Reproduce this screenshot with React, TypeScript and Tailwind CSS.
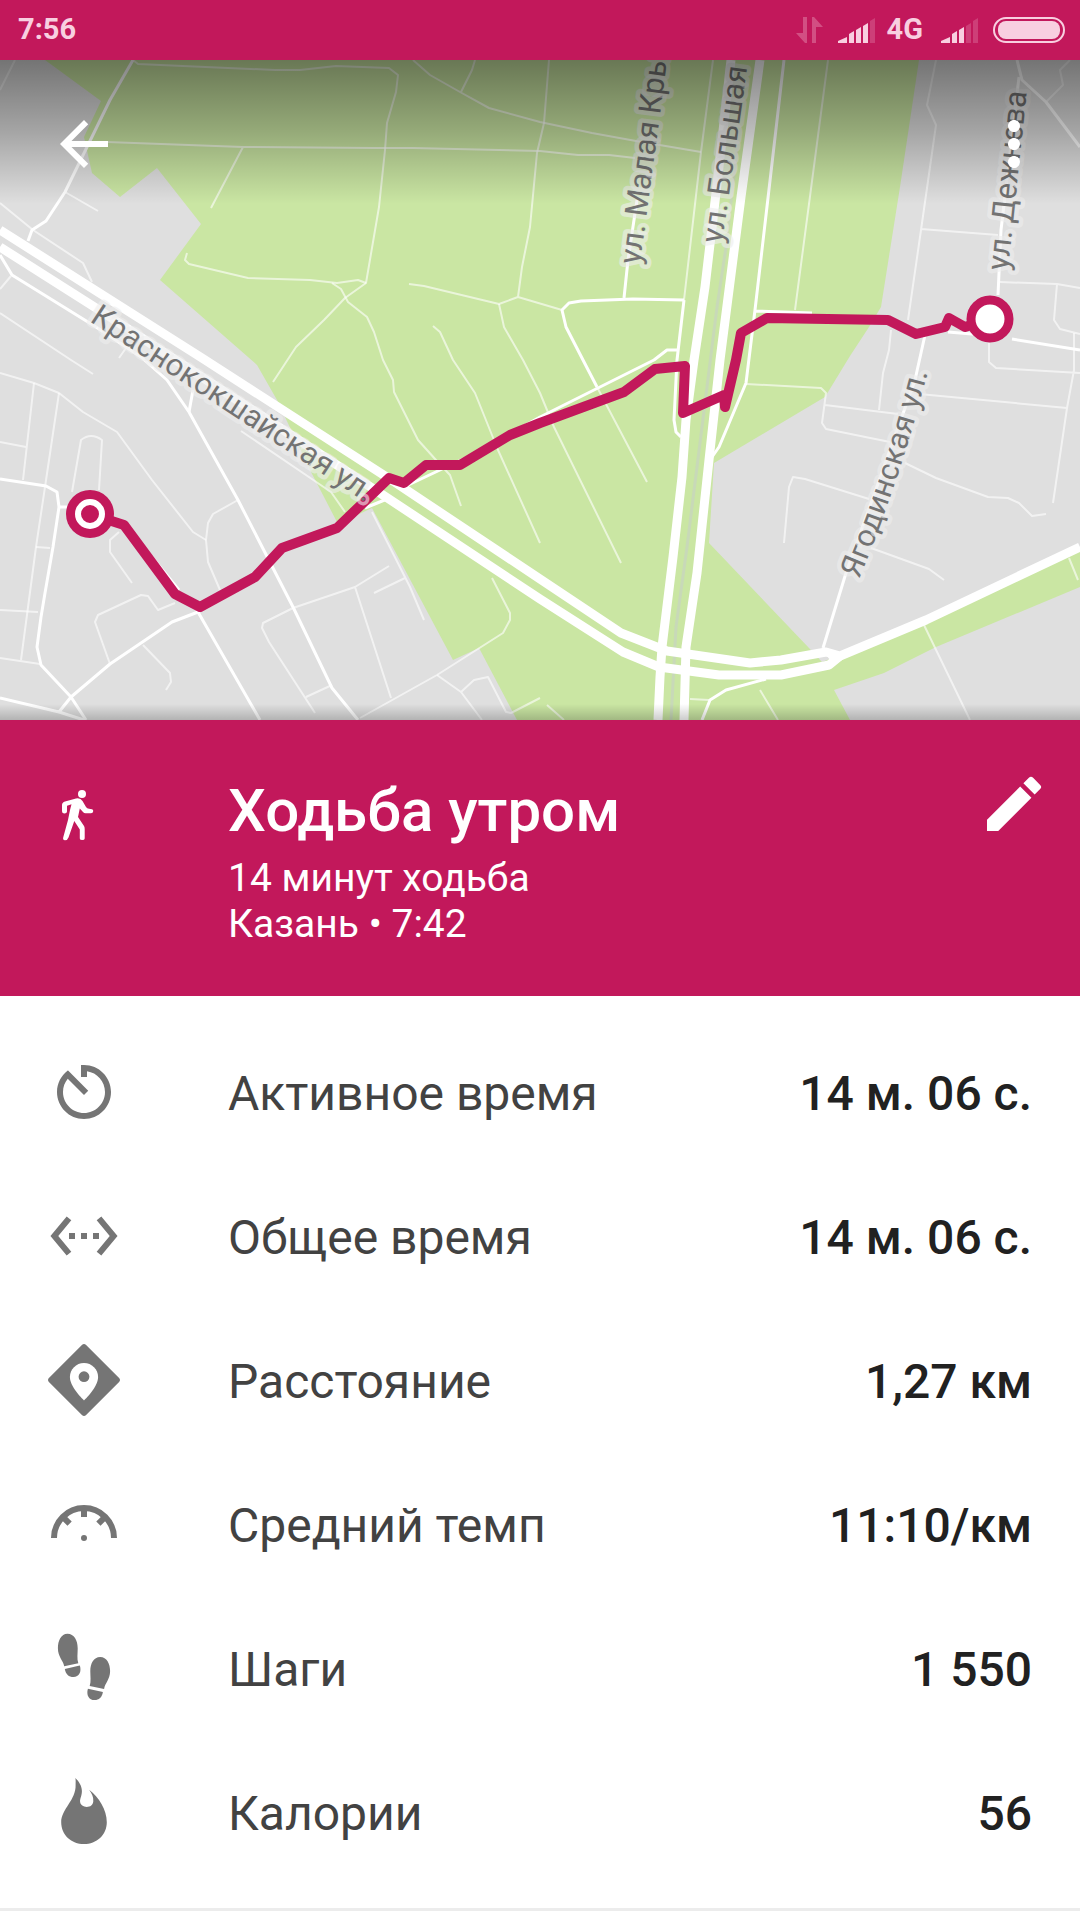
import React from 'react';
import { MdArrowBack, MdEdit, MdMoreVert, MdSettingsEthernet } from 'react-icons/md';

// ----------------------------------------------------
// MAP DATA
// ----------------------------------------------------

const PARKS = [
  'M45 60L101 101L84 137L92 173L120 197L157 168L201 224L160 280L257 365L277 400L310 470L338 524L372 508L453 660L479 648L517 720H850L834 690L884 673L936 647L1080 587V547L926 618L840 655L822 662L809 648L709 543L714 463L825 397L850 356L869 327L881 307L900 187L919 60Z',
];

const HIGHWAYS = [
  'M0 230L202 358L396 483L540 579L621 633L667 651L750 663L781 660L826 652L840 656L926 620L1080 547',
  'M0 247L96 308L386 497L540 599L623 652L659 667L719 675L781 675L829 665L840 656',
  'M731 60L716 193L705 287L694 360L686 420L682 477L673 557L662 647L660 677L658 720',
  'M760 60L741 197L720 360L709 460L697 573L686 647L684 720',
];

const STREETS = [
  'M133 60L110 100L65 192L46 221L32 230L28 241',
  'M0 255L12 275L96 327L141 357L167 380L189 412L238 500L293 607L332 688L358 720',
  'M0 479L46 486L57 492L59 507L53 547L45 593L41 617L37 647L41 665L71 697L86 720',
  'M0 698L59 712L84 720M59 712L71 697L110 664L172 622L198 612L260 720',
  'M59 507H69M193 390L189 412M128 528L179 590',
  'M365 508L387 499M404 487L478 452L540 417L654 360L667 350H678',
  'M624 298L628 260L637 200',
  'M684 300L633 299L581 301L569 303L562 310L566 327L583 360L597 387',
  'M684 300L677 360L674 420L676 432L681 437',
  'M784 60L755 310L746 383L719 447L712 457M755 311L812 313',
  'M1019 77L1001 230L998 295M948 332L984 335M1012 339L1080 350',
  'M925 335L915 380L846 573L823 648',
  'M702 720L710 700L726 690L766 679',
  'M1017 60L1022 80L1046 102L1080 147',
  'M823 648L832 660',
];

const LANES = [
  'M15 60L0 90M65 192L98 211M0 203L33 230L83 263L92 282',
  'M133 60L138 64L275 70H300L336 66L389 68L398 75L396 92L387 123L385 150L379 207L366 283L345 298L324 320L296 347L273 382',
  'M107 142L243 147L375 148H413L540 151L578 155H609L635 158M243 147L211 208',
  'M187 253L185 260L189 264L248 278L310 280L337 283L358 280L366 283',
  'M332 283L341 289L348 302L367 317L374 332L383 360L393 380L394 392L418 440L436 460L450 475L461 506',
  'M413 60L430 75L460 92L489 108L540 122L592 133L636 141L701 152M475 60L472 70L461 92',
  'M549 60L544 123L537 153L530 227L522 267L518 297L499 304L424 286L409 284M518 297L562 310',
  'M499 304L504 327L523 360L540 393L554 427L621 563',
  'M433 326L440 332L453 360L475 393L498 450L540 543',
  'M0 289L11 276M0 313L71 360L93 374M126 348L119 358',
  'M0 373L34 383L59 393L83 412L117 432L152 480L193 532L206 540',
  'M34 383L23 480M59 393L45 487L36 547L21 660M0 442L26 447',
  'M72 492L81 440Q91 432 102 440L99 490',
  'M36 547L50 548M0 610L38 612M0 658L40 664',
  'M119 532L110 540V552L132 583',
  'M175 603L158 610L148 596L141 595L98 615L95 622L110 664',
  'M143 645L170 673L171 682L166 690',
  'M220 590L208 562L206 540L208 523L213 514L238 500',
  'M241 431L331 492L345 512',
  'M389 566L355 587L293 608L263 623L262 628L269 642L315 713M355 587L391 698M306 697L332 685',
  'M405 578L374 593M372 512L410 587L424 620',
  'M360 718L437 675L503 633L510 620V613L492 578',
  'M437 675L461 692L482 720M461 692L474 680L488 677L506 712L511 713L540 698M547 705L564 720',
  'M597 387L647 482M713 60L701 152L684 300M828 60L795 310',
  'M746 384L821 388L826 393L822 423L826 429L890 442M825 405L898 414',
  'M936 60L927 105L936 125L921 230L908 320M921 229L998 235',
  'M1070 60L1060 70L1063 85L1046 102',
  'M1000 282L1057 284L1080 288M1057 284L1054 320L1060 329L1080 334',
  'M989 343V362L996 368L1080 373M1074 333V370L1067 408L1053 503M919 394L1067 408',
  'M891 330L889 350L883 373L879 410',
  'M905 463L936 478L988 497L1008 498L1019 503L1032 516L1046 514',
  'M869 499L805 479L793 477L789 487L784 543M871 548L929 569L944 580',
  'M924 625L970 720M1069 558L1078 580M690 699L709 700M760 690L778 720',
];

const RAILWAY = 'M739 130L726 247L717 307L707 387L687 547L676 627L671 720';

const ROUTE =
  'M90 514L124 525L175 594L200 607L255 577L282 548L337 528L389 478L404 483L426 465H460L510 435L540 423L624 392L655 369L685 366L683 413L724 395L725 407L736 360L741 333L767 318L888 320L916 334L945 327L949 318L965 327L990 319';

const STREET_LABELS = [
  { id: 'krasnokokshayskaya', d: 'M89 321L400 525', text: 'Краснококшайская ул.' },
  { id: 'malaya', d: 'M640 265L661 107L672 20', text: 'ул. Малая Кры' },
  { id: 'bolshaya', d: 'M722 244L754 20', text: 'ул. Большая' },
  { id: 'dezhneva', d: 'M1008 271L1029 70', text: 'ул. Дежнева' },
  { id: 'yagodinskaya', d: 'M859 579Q905 470 937 335', text: 'Ягодинская ул.' },
];

// ----------------------------------------------------
// MAP
// ----------------------------------------------------

const RouteMap = () => (
  <svg viewBox="0 60 1080 660" className="block w-full" role="img" aria-label="Маршрут">
    <defs>
      <linearGradient id="topShade" x1="0" y1="0" x2="0" y2="1">
        <stop offset="0" stopColor="#000" stopOpacity="0.48" />
        <stop offset="0.5" stopColor="#000" stopOpacity="0.26" />
        <stop offset="1" stopColor="#000" stopOpacity="0" />
      </linearGradient>
      <linearGradient id="bottomShade" x1="0" y1="0" x2="0" y2="1">
        <stop offset="0" stopColor="#000" stopOpacity="0" />
        <stop offset="1" stopColor="#000" stopOpacity="0.2" />
      </linearGradient>
      {STREET_LABELS.map((l) => (
        <path key={l.id} id={l.id} d={l.d} />
      ))}
    </defs>

    <rect x="0" y="60" width="1080" height="660" fill="#dfdfdf" />
    {PARKS.map((d) => <path key={d} d={d} fill="#cae6a3" />)}
    <path d={RAILWAY} fill="none" stroke="#c8d9b8" strokeWidth="3" />

    <g fill="none" stroke="#fff" strokeLinejoin="round">
      <g strokeWidth="2" strokeOpacity="0.6">
        {LANES.map((d) => <path key={d} d={d} />)}
      </g>
      <g strokeWidth="3">
        {STREETS.map((d) => <path key={d} d={d} />)}
      </g>
      <g strokeWidth="9">
        {HIGHWAYS.map((d) => <path key={d} d={d} />)}
      </g>
    </g>

    <path d={ROUTE} fill="none" stroke="#c2185b" strokeWidth="10" strokeLinejoin="round" />

    <g
      fill="#737373"
      stroke="#eeeeee"
      strokeOpacity="0.6"
      strokeWidth="9"
      strokeLinejoin="round"
      paintOrder="stroke"
      fontSize="31"
      className="font-[Roboto,sans-serif]"
    >
      {STREET_LABELS.map((l) => (
        <text key={l.id}>
          <textPath href={`#${l.id}`}>{l.text}</textPath>
        </text>
      ))}
    </g>

    <circle cx="90" cy="514" r="24" fill="#c2185b" />
    <circle cx="90" cy="514" r="12" fill="none" stroke="#fff" strokeWidth="6" />
    <circle cx="990" cy="319" r="19" fill="#fff" stroke="#c2185b" strokeWidth="9" />

    <rect x="0" y="60" width="1080" height="144" fill="url(#topShade)" />
    <rect x="0" y="704" width="1080" height="16" fill="url(#bottomShade)" />
  </svg>
);

// ----------------------------------------------------
// ICONS
// ----------------------------------------------------

const SignalIcon = ({ level }: { level: number }) => (
  <svg viewBox="0 0 37 26" className="h-[26px] w-[37px]" fill="currentColor">
    {['M0 26V24L9 20V26Z', 'M11 26V17L16 14V26Z', 'M18 26V13L23 10V26Z', 'M25 26V9L30 6V26Z', 'M32 26V4L37 1V26Z'].map((d, i) => (
      <path key={d} d={d} opacity={i < level ? 1 : 0.22} />
    ))}
  </svg>
);

const DataIcon = () => (
  <svg viewBox="0 0 27 26" className="h-[26px] w-[27px]" fill="currentColor" opacity="0.3">
    <path d="M7 0H11V26H9L0 16H7ZM16 26H20V10H27L18 0H16Z" />
  </svg>
);

const BatteryIcon = () => (
  <svg viewBox="0 0 72 26" className="h-[26px] w-[72px]">
    <rect x="1" y="1" width="70" height="24" rx="12" fill="none" stroke="currentColor" strokeWidth="2" />
    <rect x="5" y="4" width="62" height="18" rx="8" fill="currentColor" />
  </svg>
);

const WalkIcon = () => (
  <svg viewBox="0 0 32 51" className="h-[51px] w-8" fill="currentColor">
    <circle cx="20" cy="4" r="4" />
    <path d="M3 11.5L14 8.4Q18.5 7.5 20.5 11L24 17Q25 18.6 27 18.8L30 19.2Q31.5 19.5 31.2 21.2Q31 23.2 29 23.2H23.5Q22 23.2 21 22L17.8 18.5L16 27L22 36Q22.7 37.2 22.7 39V48.5Q22.7 50 20.2 50Q17.8 50 17.8 48.5V39.5L12.3 31L6.5 47.5Q5.5 50.3 3 50.3Q.6 50.3 1.2 47.5L6 30Q7 25 8 20L9.5 14.2L5 15.8V21.5Q5 23.5 2.4 23.5Q0 23.5 0 21.3V15Q0 12.5 3 11.5Z" />
  </svg>
);

const TimerIcon = () => (
  <svg viewBox="0 0 24 24" className="size-[72px]" fill="currentColor">
    <path d="M11 3v4h2V5.08c3.39.49 6 3.39 6 6.92 0 3.87-3.13 7-7 7s-7-3.13-7-7c0-1.68.59-3.22 1.58-4.42L12 13l1.41-1.41-6.8-6.8v.02C4.42 6.45 3 9.05 3 12c0 4.97 4.02 9 9 9 4.97 0 9-4.03 9-9s-4.03-9-9-9h-1z" />
  </svg>
);

const DistanceIcon = () => (
  <svg viewBox="0 0 24 24" className="size-[72px]">
    <path d="M11.3.3Q12-.3 12.7.3L23.7 11.3Q24.3 12 23.7 12.7L12.7 23.7Q12 24.3 11.3 23.7L.3 12.7Q-.3 12 .3 11.3Z" fill="currentColor" />
    <path d="M12 6.3C9.4 6.3 7.3 8.4 7.3 11C7.3 14.4 12 18.8 12 18.8S16.7 14.4 16.7 11C16.7 8.4 14.6 6.3 12 6.3Z" fill="#fff" />
    <circle cx="12" cy="10.9" r="1.8" fill="currentColor" />
  </svg>
);

const PaceIcon = () => (
  <svg viewBox="0 0 24 24" className="size-[72px]" fill="none" stroke="currentColor" strokeWidth="2">
    <path d="M2 16.7A10 10 0 0 1 22 16.7" />
    <path d="M12 6V9.7M5 9.7L7.2 11.9M19 9.7L16.8 11.9" />
    <circle cx="12" cy="16.7" r="1" fill="currentColor" stroke="none" />
  </svg>
);

const StepsIcon = () => (
  <svg viewBox="0 0 24 24" className="size-[72px]" fill="currentColor">
    <path d="M6.5.6C4.3.6 3.3 3 3.3 5.4C3.3 8.2 5 9.4 5.4 11.4L10.1 10.4C9.6 8.9 9.9 7.2 9.9 5.4C9.9 2.8 8.7.6 6.5.6Z" />
    <path d="M5.6 12.3L10.6 11.2C11.3 13.3 10.3 15 8.5 15C6.9 15 5.9 14 5.6 12.3Z" />
    <path d="M17.4 8.3C19.6 8.3 20.7 10.6 20.7 13C20.7 15.8 19 17 18.7 19L13.9 18C14.4 16.5 14.1 14.8 14.1 13C14.1 10.5 15.2 8.3 17.4 8.3Z" />
    <path d="M13.3 18.9L18.3 20C18 21.8 17 22.7 15.5 22.7C13.6 22.7 12.7 21 13.3 18.9Z" />
  </svg>
);

const CaloriesIcon = () => (
  <svg viewBox="0 0 24 24" className="size-[72px]" fill="currentColor">
    <path d="M9.1.7C10.2 1.7 11.3 3.3 11.3 5C11.3 6.7 10.6 7.5 10.7 8.6C10.8 9.7 11.8 10.3 12.9 10.3C14.1 10.3 15 9.7 15.1 8.4C15.2 7 14.6 5.8 13.7 4.6C17 7 19.6 11.4 19.6 15.4C19.6 19.6 16.2 22.7 12 22.7C7.8 22.7 4.4 19.6 4.4 15.4C4.4 11 9.4 8 9.2 3C9.2 2.2 9.3 1.5 9.1.7Z" />
  </svg>
);

// ----------------------------------------------------
// STATS
// ----------------------------------------------------

const STATS = [
  { label: 'Активное время', value: '14 м. 06 с.', icon: <TimerIcon /> },
  { label: 'Общее время', value: '14 м. 06 с.', icon: <MdSettingsEthernet className="size-[72px]" /> },
  { label: 'Расстояние', value: '1,27 км', icon: <DistanceIcon /> },
  { label: 'Средний темп', value: '11:10/км', icon: <PaceIcon /> },
  { label: 'Шаги', value: '1 550', icon: <StepsIcon /> },
  { label: 'Калории', value: '56', icon: <CaloriesIcon /> },
];

const StatRow = ({ label, value, icon }: (typeof STATS)[number]) => (
  <div className="flex h-36 items-center px-12">
    <dt className="flex flex-1 items-center gap-[108px] text-[#424242]">
      <span className="shrink-0 text-[#757575]">{icon}</span>
      <span className="pt-[3px]">{label}</span>
    </dt>
    <dd className="pt-[3px] font-medium text-[#212121]">{value}</dd>
  </div>
);

export default function App() {
  return (
    <div className="min-h-screen bg-white font-[Roboto,sans-serif]">
      <header className="flex h-[60px] items-center justify-between bg-[#c2185b] pr-[15px] pl-[18px] text-[#f8cfe0]">
        <span className="text-[29px] font-bold">7:56</span>
        <div className="flex items-center">
          <DataIcon />
          <span className="ml-[15px] flex"><SignalIcon level={4} /></span>
          <span className="mr-[18px] ml-3 text-[29px] font-bold">4G</span>
          <SignalIcon level={3} />
          <span className="ml-[15px] flex"><BatteryIcon /></span>
        </div>
      </header>

      <section className="relative">
        <RouteMap />
        <div className="absolute inset-x-0 top-0 flex justify-between pt-12 pr-[30px] pl-12 text-white">
          <button type="button" aria-label="Назад">
            <MdArrowBack className="size-[72px]" />
          </button>
          <button type="button" aria-label="Ещё">
            <MdMoreVert className="size-[72px]" />
          </button>
        </div>
      </section>

      <section className="flex h-[276px] items-start bg-[#c2185b] pt-12 pr-[30px] pl-[62px] text-white">
        <div className="w-[166px] shrink-0 pt-[22px]">
          <WalkIcon />
        </div>
        <div className="flex-1 pt-[7px]">
          <h1 className="text-[60px] leading-[72px] font-medium">Ходьба утром</h1>
          <p className="mt-2 text-[39px] leading-[46px]">14 минут ходьба</p>
          <p className="text-[39px] leading-[46px]">Казань • 7:42</p>
        </div>
        <button type="button" aria-label="Изменить">
          <MdEdit className="size-[72px]" />
        </button>
      </section>

      <dl className="border-b-[3px] border-[#ececec] pt-6 pb-6 text-[48px] leading-[56px]">
        {STATS.map((s) => <StatRow key={s.label} {...s} />)}
      </dl>
    </div>
  );
}
